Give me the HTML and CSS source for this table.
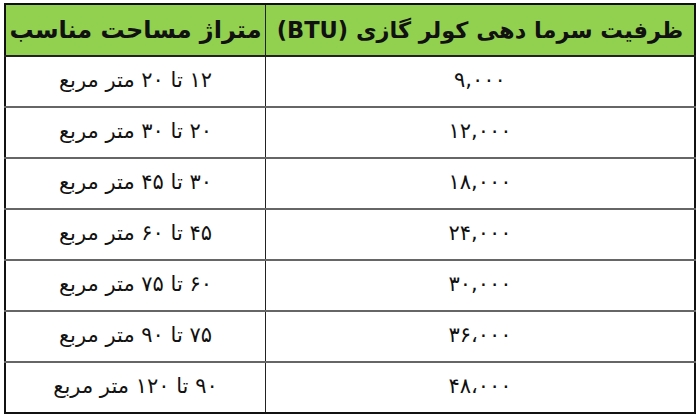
FILE: index.html
```html
<!DOCTYPE html>
<html lang="fa" dir="rtl">
<head>
<meta charset="utf-8">
<link rel="stylesheet" href="styles.css">
</head>
<body>
<div class="wrap">
<table class="btu">
<thead>
<tr><th class="c1">ظرفیت سرما دهی کولر گازی (BTU)</th><th class="c2">متراژ مساحت مناسب</th></tr>
</thead>
<tbody>
<tr><td>۹,۰۰۰</td><td>۱۲ تا ۲۰ متر مربع</td></tr>
<tr><td>۱۲,۰۰۰</td><td>۲۰ تا ۳۰ متر مربع</td></tr>
<tr><td>۱۸,۰۰۰</td><td>۳۰ تا ۴۵ متر مربع</td></tr>
<tr><td>۲۴,۰۰۰</td><td>۴۵ تا ۶۰ متر مربع</td></tr>
<tr><td>۳۰,۰۰۰</td><td>۶۰ تا ۷۵ متر مربع</td></tr>
<tr><td>۳۶،۰۰۰</td><td>۷۵ تا ۹۰ متر مربع</td></tr>
<tr><td>۴۸،۰۰۰</td><td>۹۰ تا ۱۲۰ متر مربع</td></tr>
</tbody>
</table>
</div>
</body>
</html>
```
FILE: styles.css
```css
html, body { margin: 0; padding: 0; background: #fff; }
.wrap { padding: 3px 4px 0 4px; width: 692px; }
.btu {
  border-collapse: collapse;
  width: 692px;
  border: 2px solid #111;
  font-family: "DejaVu Sans", "Noto Sans", sans-serif;
  color: #111;
  table-layout: fixed;
}
.btu th {
  background: #92d050;
  height: 50px;
  padding: 0;
  font-size: 22.5px;
  line-height: 30px;
  font-weight: bold;
  border-bottom: 2px solid #222;
  border-left: 1px solid #222;
  white-space: nowrap;
}
.btu th.c1 { width: 428px; }
.btu th.c2 { font-size: 24px; }
.btu td {
  height: 46px;
  padding: 0 0 3px 0;
  text-align: center;
  font-size: 21px;
  line-height: 26px;
  border-bottom: 2px solid #666;
  border-left: 1px solid #222;
}
.btu tbody tr:last-child td { border-bottom: 2px solid #111; }
```
